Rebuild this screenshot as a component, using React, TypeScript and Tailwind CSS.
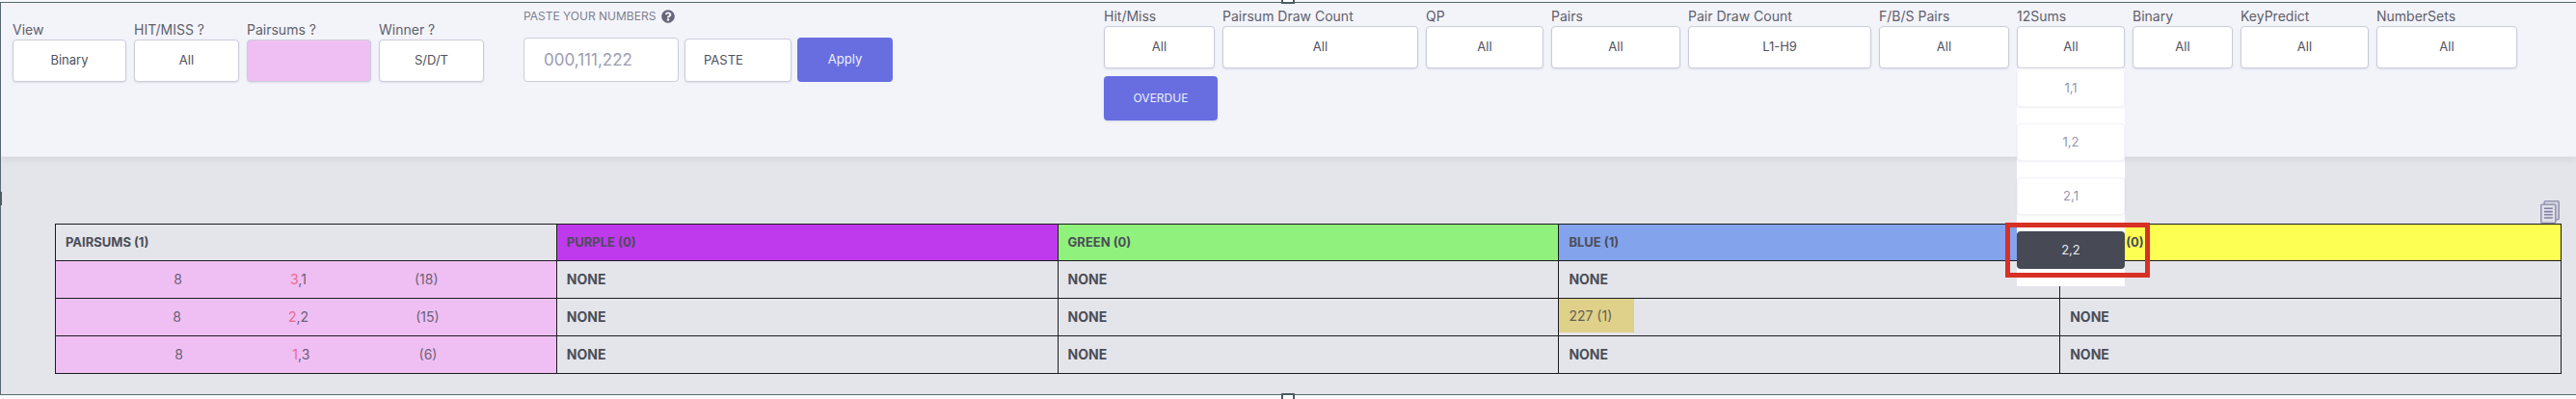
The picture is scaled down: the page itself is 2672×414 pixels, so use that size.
import React from "react";
import { FaQuestionCircle } from "react-icons/fa";
import clsx from "clsx";

const boxClass =
  "h-11 w-full rounded border border-[#cbccda] text-center text-[13px] text-[#50515e] shadow-[0_1px_2px_rgba(60,60,100,0.12)]";

type FieldProps = {
  id: string;
  label: string;
  value: string;
  width: string;
  fill?: string;
  open?: boolean;
  children?: React.ReactNode;
};

function Field({ id, label, value, width, fill = "bg-white", open, children }: FieldProps) {
  return (
    <div className={clsx("relative shrink-0", width)}>
      <label htmlFor={id} className="block h-5 text-sm leading-5 whitespace-nowrap text-[#5f606c]">
        {label}
      </label>
      <button
        id={id}
        type="button"
        aria-haspopup="listbox"
        aria-expanded={open ?? false}
        className={clsx(boxClass, fill)}
      >
        {value}
      </button>
      {children}
    </div>
  );
}

function SumsMenu() {
  return (
    <div className="absolute top-16 left-0 z-10 flex w-full flex-col gap-[17px] bg-white pt-px pb-[18px]">
      {["1,1", "1,2", "2,1"].map((v) => (
        <button
          key={v}
          type="button"
          className="h-[39px] rounded border border-[#f3f3f8] bg-white text-[13px] text-[#9596ad] shadow-[0_1px_2px_rgba(60,60,100,0.08)]"
        >
          {v}
        </button>
      ))}
      <div className="relative flex">
        <button type="button" className="h-[39px] w-full rounded bg-[#474954] text-[13px] text-[#e9e9ee]">
          2,2
        </button>
        <div className="pointer-events-none absolute -top-[9px] -right-[26px] -bottom-[9px] -left-3 border-[5px] border-[#d83025]" />
      </div>
    </div>
  );
}

function CopyIcon() {
  return (
    <svg width="20" height="24" viewBox="0 0 20 24" fill="none" stroke="#9697b0" strokeWidth="1.6">
      <path d="M4.2 4V1.7a.9.9 0 0 1 .9-.9h13.2a.9.9 0 0 1 .9.9v17.1a.9.9 0 0 1-.9.9H16" fill="#d6d7e2" />
      <rect x="0.8" y="4.3" width="15" height="18.9" rx="1" fill="#dfe0e9" />
      <path d="M4 8.3h8.8M4 11.6h8.8M4 14.8h8.8M4 18h8.8" stroke="#8081a0" />
    </svg>
  );
}

const pairsums = [
  { count: "8", hit: "3", rest: ",1", total: "(18)" },
  { count: "8", hit: "2", rest: ",2", total: "(15)" },
  { count: "8", hit: "1", rest: ",3", total: "(6)" },
];

const headers = [
  { text: "PAIRSUMS (1)", fill: "" },
  { text: "PURPLE (0)", fill: "bg-[#bf3aed]" },
  { text: "GREEN (0)", fill: "bg-[#90f17d]" },
  { text: "BLUE (1)", fill: "bg-[#83a3ed]" },
  { text: "YELLOW (0)", fill: "bg-[#feff53]" },
];

const cellClass = "border border-[#1c1c20]";

export default function App() {
  return (
    <div className="relative bg-[#f7f9fb] pt-[2px] pb-1 font-['Inter','Noto_Sans',sans-serif]">
      <div className="border-y border-l border-[#5a6970] bg-[#e4e5ea]">
        <header className="relative grid grid-cols-[530fr_602fr_1514fr] border-b border-[#e9eaf0] bg-[#f3f4fa] pr-[13px] pb-[37px] pl-3 shadow-[0_2px_6px_rgba(60,60,80,0.10)]">
          <div className="flex items-start gap-2 pt-[18px]">
            <Field id="view" label="View" value="Binary" width="w-[118px]" />
            <Field id="hitmiss" label="HIT/MISS ?" value="All" width="w-[109px]" />
            <Field id="pairsums" label="Pairsums ?" value="" width="w-[129px]" fill="bg-[#efbff4]" />
            <Field id="winner" label="Winner ?" value="S/D/T" width="w-[109px]" />
          </div>

          <div className="pt-1">
            <label htmlFor="numbers" className="flex h-5 items-center gap-[6px] text-xs text-[#7e7f90]">
              PASTE YOUR NUMBERS
              <FaQuestionCircle size={14} className="text-[#66687a]" />
            </label>
            <div className="mt-3 flex items-end gap-[6px]">
              <input
                id="numbers"
                type="text"
                placeholder="000,111,222"
                className="h-[46px] w-[161px] rounded border border-[#cbccda] bg-white px-5 text-[17px] text-[#50515e] placeholder:text-[#9c9db0]"
              />
              <button
                type="button"
                className="h-[45px] w-[111px] rounded border border-[#cbccda] bg-white px-[19px] text-left text-[13px] text-[#50515e] shadow-[0_1px_2px_rgba(60,60,100,0.12)]"
              >
                PASTE
              </button>
              <button type="button" className="h-[46px] w-[99px] rounded bg-[#686ee0] text-[13px] text-[#eeeefc]">
                Apply
              </button>
            </div>
          </div>

          <div className="pt-1">
            <div className="flex items-start gap-2">
              <Field id="hm" label="Hit/Miss" value="All" width="w-[115px]" />
              <Field id="psdc" label="Pairsum Draw Count" value="All" width="w-[203px]" />
              <Field id="qp" label="QP" value="All" width="w-[122px]" />
              <Field id="pairs" label="Pairs" value="All" width="w-[134px]" />
              <Field id="pdc" label="Pair Draw Count" value="L1-H9" width="w-[190px]" />
              <Field id="fbs" label="F/B/S Pairs" value="All" width="w-[135px]" />
              <Field id="sums" label="12Sums" value="All" width="w-[112px]" open>
                <SumsMenu />
              </Field>
              <Field id="binary" label="Binary" value="All" width="w-[104px]" />
              <Field id="key" label="KeyPredict" value="All" width="w-[133px]" />
              <Field id="sets" label="NumberSets" value="All" width="w-[146px]" />
            </div>
            <button
              type="button"
              className="mt-2 block h-[46px] w-[118px] rounded bg-[#686ee0] text-xs text-[#eeeefc] shadow-[0_1px_2px_rgba(60,60,100,0.15)]"
            >
              OVERDUE
            </button>
          </div>
        </header>

        <main className="pt-[45px] pr-[15px] pb-[21px] pl-14">
          <div className="flex justify-end pr-[2px]">
            <button type="button" aria-label="Copy">
              <CopyIcon />
            </button>
          </div>
          <table className="w-full table-fixed border-collapse text-sm text-[#4b4d58]">
            <thead>
              <tr className="h-[38px]">
                {headers.map((h) => (
                  <th
                    key={h.text}
                    scope="col"
                    className={clsx(cellClass, "px-[10px] text-left text-[13px] font-bold", h.fill)}
                  >
                    {h.text}
                  </th>
                ))}
              </tr>
            </thead>
            <tbody>
              {pairsums.map((row, r) => (
                <tr key={row.total} className="h-[39px]">
                  <td className={clsx(cellClass, "bg-[#efbff4] px-[10px] text-[#6d5f76]")}>
                    <div className="flex justify-evenly">
                      <span>{row.count}</span>
                      <span>
                        <span className="text-[#f0688a]">{row.hit}</span>
                        {row.rest}
                      </span>
                      <span>{row.total}</span>
                    </div>
                  </td>
                  {[1, 2, 3, 4].map((c) =>
                    r === 1 && c === 3 ? (
                      <td key={c} className={clsx(cellClass, "p-0 align-top")}>
                        <div className="flex h-[35px] w-[78px] items-center bg-[#dfd08a] pl-[10px] text-[#66624f]">
                          227 (1)
                        </div>
                      </td>
                    ) : (
                      <td key={c} className={clsx(cellClass, "px-[10px] font-bold")}>
                        NONE
                      </td>
                    ),
                  )}
                </tr>
              ))}
            </tbody>
          </table>
        </main>
      </div>

      <div className="absolute top-0 left-1/2 h-1 w-[14px] -translate-x-1/2 border-2 border-t-0 border-[#4d5c63] bg-white" />
      <div className="absolute bottom-0 left-1/2 h-[6px] w-[14px] -translate-x-1/2 border-2 border-b-0 border-[#4d5c63] bg-white" />
      <div className="absolute top-[199px] left-0 h-[14px] w-[2px] bg-[#4d5c63]" />
    </div>
  );
}
